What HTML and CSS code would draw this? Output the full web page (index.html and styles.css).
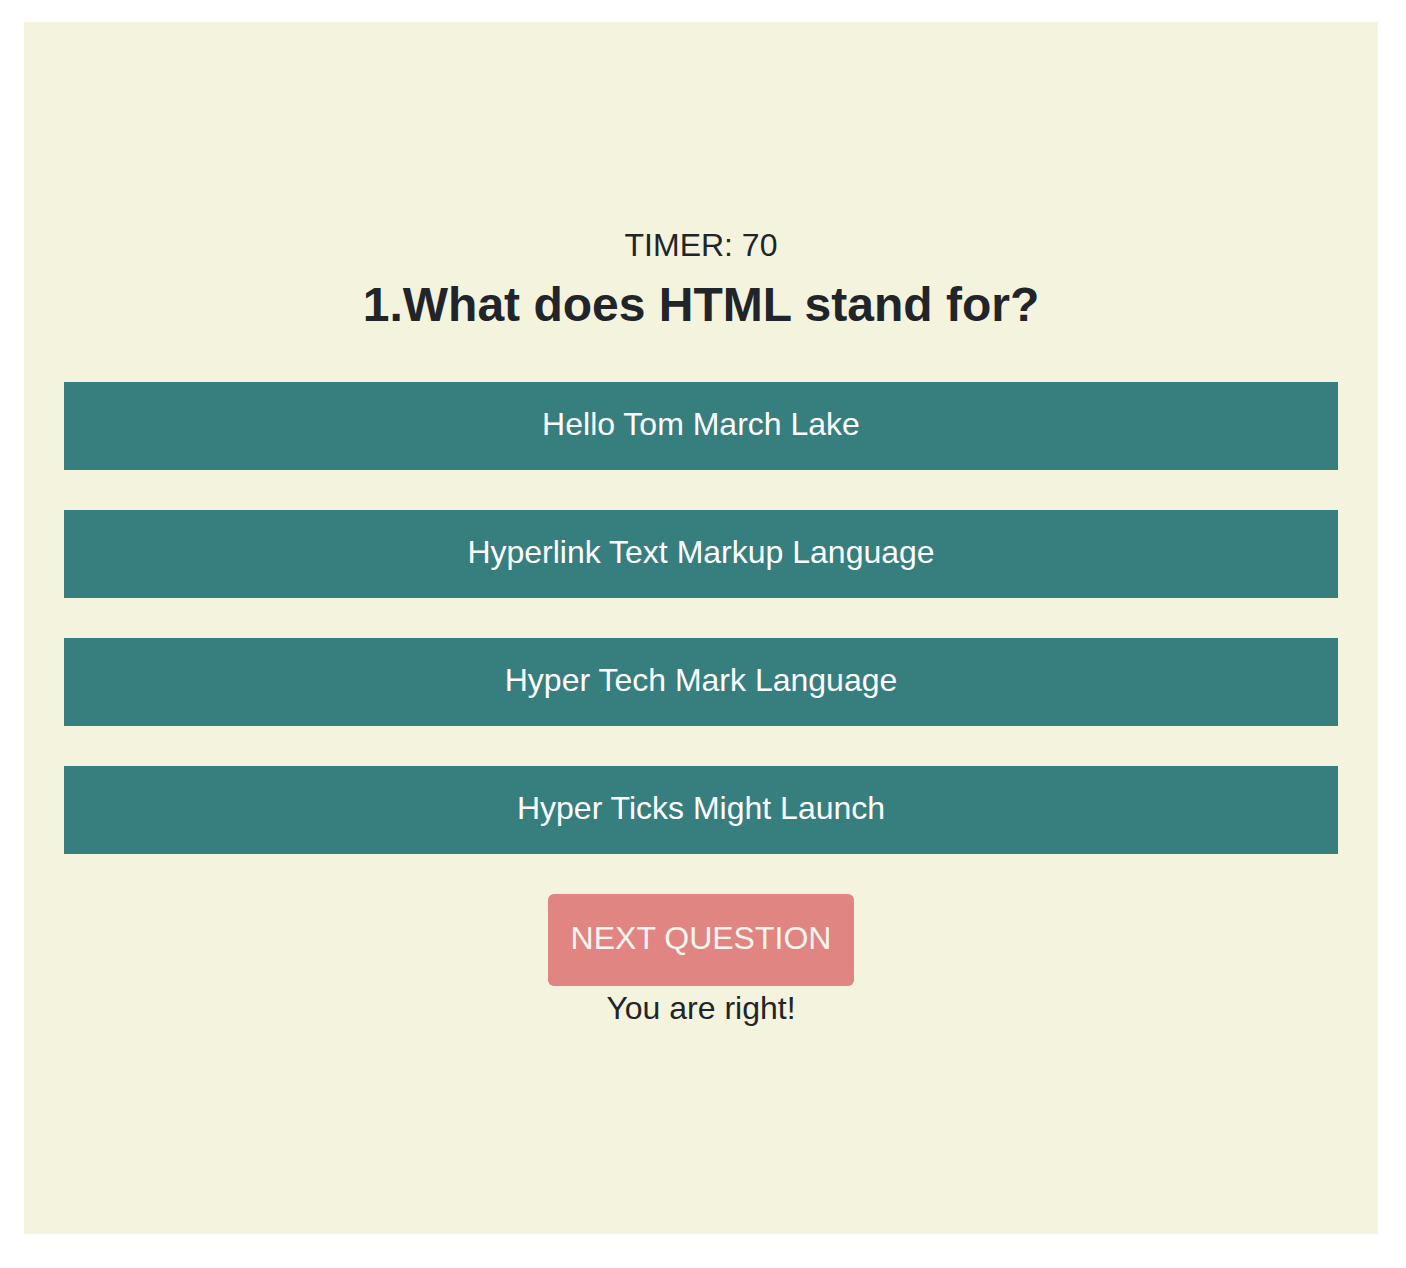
FILE: index.html
```html
<!DOCTYPE html>
<html lang="en">
<head>
<meta charset="utf-8">
<title>Quiz</title>
<link rel="stylesheet" href="styles.css">
</head>
<body>
<main class="quiz">
  <div class="timer">TIMER: 70</div>
  <h1 class="question">1.What does HTML stand for?</h1>
  <div class="answers">
    <button class="answer">Hello Tom March Lake</button>
    <button class="answer">Hyperlink Text Markup Language</button>
    <button class="answer">Hyper Tech Mark Language</button>
    <button class="answer">Hyper Ticks Might Launch</button>
  </div>
  <button class="next">NEXT QUESTION</button>
  <p class="feedback">You are right!</p>
</main>
</body>
</html>
```

FILE: styles.css
```css
html, body {
  margin: 0;
  padding: 0;
  background: #ffffff;
}

body {
  padding: 22px 28px 34px 24px;
  font-family: "Liberation Sans", Arial, Helvetica, sans-serif;
  color: #212529;
}

.quiz {
  box-sizing: border-box;
  height: 1212px;
  background: #f4f3de;
  padding: 205px 40px 0 40px;
  display: flex;
  flex-direction: column;
  align-items: center;
}

.timer {
  font-size: 32px;
  line-height: 37px;
}

.question {
  margin: 13px 0 0 0;
  font-size: 48px;
  line-height: 55px;
  font-weight: 700;
}

.answers {
  align-self: stretch;
  display: flex;
  flex-direction: column;
  gap: 40px;
  margin-top: 50px;
}

.answer {
  box-sizing: border-box;
  height: 88px;
  border: 0;
  margin: 0;
  padding: 0 0 3px 0;
  background: #377e7f;
  color: #ffffff;
  font-family: inherit;
  font-size: 32px;
  cursor: pointer;
}

.next {
  box-sizing: border-box;
  margin-top: 40px;
  height: 92px;
  padding: 0 23px 4px 23px;
  border: 0;
  border-radius: 6px;
  background: #e08582;
  color: #f7f5ee;
  font-family: inherit;
  font-size: 32px;
  cursor: pointer;
}

.feedback {
  margin: 4px 0 0 0;
  font-size: 32px;
  line-height: 37px;
}
```
